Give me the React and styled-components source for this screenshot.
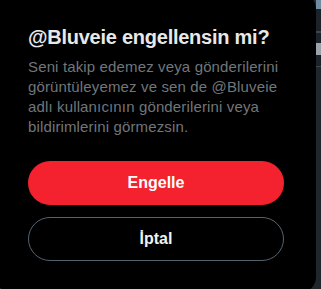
import styled, { createGlobalStyle } from "styled-components";

const GlobalStyle = createGlobalStyle`
  html, body {
    margin: 0;
    padding: 0;
    background: #1f262c;
    overflow: hidden;
  }
`;

const Page = styled.div`
  width: 321px;
  height: 289px;
  display: flex;
  overflow: hidden;
  background: #1f262c;
`;

const Modal = styled.div`
  flex: none;
  width: 320px;
  height: 300px;
  margin: -7px 0 0 -4px;
  box-sizing: border-box;
  padding: 32px;
  background: #000;
  border-radius: 16px;
  display: flex;
  flex-direction: column;
  font-family: "Liberation Sans", Arial, sans-serif;
`;

const Backdrop = styled.div`
  flex: 1;
  display: flex;
  flex-direction: column;
`;

const Strip = styled.div`
  height: ${(p) => p.$h}px;
  background: ${(p) => p.$c};
`;

const Title = styled.h1`
  margin: 0 0 8px;
  font-size: 20px;
  line-height: 24px;
  font-weight: 700;
  letter-spacing: -0.25px;
  color: #e7e9ea;
  white-space: nowrap;
`;

const Desc = styled.p`
  margin: 0;
  font-size: 15px;
  line-height: 20px;
  letter-spacing: 0.14px;
  color: #71767b;
  white-space: nowrap;
`;

const Actions = styled.div`
  margin-top: 24px;
  display: flex;
  flex-direction: column;
  gap: 12px;
`;

const Button = styled.button`
  height: 44px;
  border-radius: 9999px;
  font-family: inherit;
  font-size: 16px;
  font-weight: 700;
  cursor: pointer;
  box-sizing: border-box;
  background: ${(p) => (p.$danger ? "#f4212e" : "transparent")};
  color: ${(p) => (p.$danger ? "#fff" : "#eff3f4")};
  border: ${(p) => (p.$danger ? "none" : "1px solid #536471")};
`;

const App = () => {
  return (
    <Page>
      <GlobalStyle />
      <Modal>
        <Title>@Bluveie engellensin mi?</Title>
        <Desc>
          Seni takip edemez veya gönderilerini
          <br />
          görüntüleyemez ve sen de @Bluveie
          <br />
          adlı kullanıcının gönderilerini veya
          <br />
          bildirimlerini görmezsin.
        </Desc>
        <Actions>
          <Button $danger>Engelle</Button>
          <Button>İptal</Button>
        </Actions>
      </Modal>
      <Backdrop>
        <Strip $h={9} $c="#6f8ca3" />
        <Strip $h={22} $c="#1c2227" />
        <Strip $h={2} $c="#3b4652" />
        <Strip $h={10} $c="#1c2227" />
        <Strip $h={12} $c="#9aa3ab" />
        <Strip $h={11} $c="#1c2227" />
        <Strip $h={1} $c="#3b4652" />
        <Strip $h={222} $c="#1f272d" />
      </Backdrop>
    </Page>
  );
};

export default App;
